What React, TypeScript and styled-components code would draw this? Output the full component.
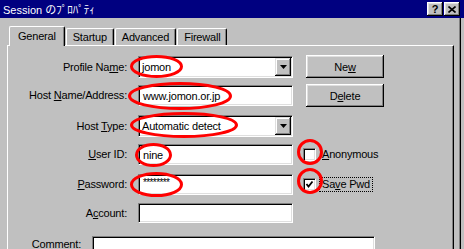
import React from "react";
import styled, { createGlobalStyle } from "styled-components";

const GlobalStyle = createGlobalStyle`
  html, body {
    margin: 0;
    padding: 0;
    background: #c0c0c0;
  }
  body {
    font-family: "Liberation Sans", Arial, sans-serif;
    font-size: 11px;
    letter-spacing: -0.2px;
    color: #000;
  }
  u {
    text-underline-offset: 1px;
  }
`;

const raised = `
  box-shadow: inset -1px -1px #000, inset 1px 1px #fff,
    inset -2px -2px #808080, inset 2px 2px #dfdfdf;
`;

const sunken = `
  border-top: 1px solid #808080;
  border-left: 1px solid #808080;
  border-bottom: 1px solid #fff;
  border-right: 1px solid #fff;
  box-shadow: inset 1px 1px #000, inset -1px -1px #dfdfdf;
`;

type Mark = { cx: number; cy: number; rx: number; ry: number };

const marks: Mark[] = [
  { cx: 156.5, cy: 66.5, rx: 25, ry: 10 },
  { cx: 180, cy: 96, rx: 50.5, ry: 12.5 },
  { cx: 184, cy: 125, rx: 52.5, ry: 11.5 },
  { cx: 153.5, cy: 155, rx: 17, ry: 10.5 },
  { cx: 156.5, cy: 184.5, rx: 25, ry: 11 },
  { cx: 310, cy: 152, rx: 11.5, ry: 11.5 },
  { cx: 310, cy: 181, rx: 11.5, ry: 11.5 },
];

const tabs = ["General", "Startup", "Advanced", "Firewall"];

function ComboBox({ value }: { value: string }) {
  return (
    <Combo>
      <FieldText>{value}</FieldText>
      <DropButton>
        <svg width="7" height="4" viewBox="0 0 7 4">
          <path d="M0 0h7L3.5 4z" fill="#000" />
        </svg>
      </DropButton>
    </Combo>
  );
}

function CheckBox({ checked }: { checked?: boolean }) {
  return (
    <Box>
      {checked && (
        <svg width="9" height="9" viewBox="0 0 9 9">
          <polyline
            points="1.5,4 3.5,6.5 7.5,1.5"
            fill="none"
            stroke="#000"
            strokeWidth="1.8"
          />
        </svg>
      )}
    </Box>
  );
}

export default function App() {
  return (
    <>
      <GlobalStyle />
      <Window>
        <TitleBar>
          <Title>Session のﾌﾟﾛﾊﾟﾃｨ</Title>
          <CaptionButtons>
            <CaptionButton>?</CaptionButton>
            <CaptionButton>
              <svg width="8" height="7" viewBox="0 0 8 7">
                <path d="M0.5 0.5L7.5 6.5M7.5 0.5L0.5 6.5" stroke="#000" strokeWidth="1.6" />
              </svg>
            </CaptionButton>
          </CaptionButtons>
        </TitleBar>

        <Body>
          <TabStrip>
            {tabs.map((t, i) => (
              <Tab key={t} $active={i === 0}>
                {t}
              </Tab>
            ))}
          </TabStrip>

          <Panel>
            <Form>
              <Label $h={22}>
                Profile Na<u>m</u>e:
              </Label>
              <ComboBox value="jomon" />
              <PushButton>
                Ne<u>w</u>
              </PushButton>

              <Label $h={21}>
                Host <u>N</u>ame/Address:
              </Label>
              <TextBox $h={21}>
                <FieldText>www.jomon.or.jp</FieldText>
              </TextBox>
              <PushButton>
                D<u>e</u>lete
              </PushButton>

              <Label $h={22}>
                Host <u>T</u>ype:
              </Label>
              <ComboBox value="Automatic detect" />

              <Label $h={21}>
                <u>U</u>ser ID:
              </Label>
              <TextBox $h={21}>
                <FieldText>nine</FieldText>
              </TextBox>
              <CheckRow>
                <CheckBox />
                <CheckLabel>
                  <u>A</u>nonymous
                </CheckLabel>
              </CheckRow>

              <Label $h={21}>
                <u>P</u>assword:
              </Label>
              <TextBox $h={21}>
                <Secret>********</Secret>
              </TextBox>
              <CheckRow>
                <CheckBox checked />
                <CheckLabel $focused>
                  Sa<u>v</u>e Pwd
                </CheckLabel>
              </CheckRow>

              <Label $h={20}>
                A<u>c</u>count:
              </Label>
              <TextBox $h={20} />
            </Form>

            <CommentRow>
              <CommentLabel>
                Co<u>m</u>ment:
              </CommentLabel>
              <CommentBox />
            </CommentRow>
          </Panel>
        </Body>

        <Marks width="464" height="249" viewBox="0 0 464 249">
          {marks.map((m, i) => (
            <ellipse
              key={i}
              cx={m.cx}
              cy={m.cy}
              rx={m.rx}
              ry={m.ry}
              fill="none"
              stroke="#ff0000"
              strokeWidth="3"
            />
          ))}
        </Marks>
      </Window>
    </>
  );
}

const Window = styled.div`
  position: relative;
  width: 464px;
  height: 249px;
  overflow: hidden;
  background: #c0c0c0;
`;

const TitleBar = styled.div`
  height: 18px;
  background: #000080;
  color: #fff;
  display: flex;
  align-items: center;
  justify-content: space-between;
  padding: 0 4px 0 3px;
`;

const Title = styled.div`
  font-family: "Liberation Sans", "Noto Sans CJK JP", sans-serif;
  font-size: 11px;
  letter-spacing: 0;
  white-space: nowrap;
`;

const CaptionButtons = styled.div`
  display: flex;
  gap: 1px;
`;

const CaptionButton = styled.div`
  box-sizing: border-box;
  width: 16px;
  height: 14px;
  background: #c0c0c0;
  color: #000;
  font-weight: bold;
  font-size: 11px;
  display: flex;
  align-items: center;
  justify-content: center;
  ${raised}
`;

const Body = styled.div`
  box-sizing: border-box;
  width: 461px;
  height: 231px;
  padding: 8px 0 0 7px;
  border-right: 1px solid #000;
  box-shadow: inset -1px 0 #808080;
`;

const TabStrip = styled.div`
  display: flex;
  align-items: flex-end;
  height: 19px;
  padding-left: 2px;
  position: relative;
  z-index: 1;
`;

const Tab = styled.div<{ $active?: boolean }>`
  box-sizing: border-box;
  height: ${(p) => (p.$active ? 20 : 17)}px;
  margin-bottom: ${(p) => (p.$active ? -1 : 0)}px;
  margin-left: ${(p) => (p.$active ? 0 : 1)}px;
  padding: 0 ${(p) => (p.$active ? 8 : 6)}px ${(p) => (p.$active ? 2 : 0)}px;
  background: #c0c0c0;
  border-top: 1px solid #fff;
  border-left: 1px solid #fff;
  border-right: 1px solid #000;
  border-radius: 2px 2px 0 0;
  box-shadow: inset -1px 0 #808080;
  display: flex;
  align-items: center;
  white-space: nowrap;
`;

const Panel = styled.div`
  box-sizing: border-box;
  width: 447px;
  height: 210px;
  background: #c0c0c0;
  border-top: 1px solid #fff;
  border-left: 1px solid #fff;
  border-right: 1px solid #000;
  box-shadow: inset -1px 0 #808080;
`;

const Form = styled.div`
  display: grid;
  grid-template-columns: 130px 155px 1fr;
  grid-template-rows: 29px 30px 29px 30px 29px 20px;
  align-items: start;
  padding-top: 10px;
`;

const Label = styled.div<{ $h: number }>`
  grid-column: 1;
  height: ${(p) => p.$h}px;
  line-height: ${(p) => p.$h}px;
  text-align: right;
  padding-right: 11px;
  white-space: nowrap;
`;

const TextBox = styled.div<{ $h: number }>`
  box-sizing: border-box;
  height: ${(p) => p.$h}px;
  background: #fff;
  padding: 0 2px;
  display: flex;
  align-items: center;
  ${sunken}
`;

const Combo = styled.div`
  box-sizing: border-box;
  height: 22px;
  background: #fff;
  padding: 1px;
  display: flex;
  align-items: stretch;
  ${sunken}
`;

const FieldText = styled.span`
  flex: 1;
  display: flex;
  align-items: center;
  padding-left: 2px;
  white-space: nowrap;
`;

const Secret = styled.span`
  font-size: 10px;
  letter-spacing: -0.6px;
  padding-left: 2px;
  margin-top: -5px;
`;

const DropButton = styled.div`
  box-sizing: border-box;
  width: 16px;
  background: #c0c0c0;
  display: flex;
  align-items: center;
  justify-content: center;
  box-shadow: inset -1px -1px #000, inset 1px 1px #dfdfdf,
    inset -2px -2px #808080, inset 2px 2px #fff;
`;

const PushButton = styled.div`
  box-sizing: border-box;
  width: 78px;
  height: 23px;
  margin: -1px 0 0 13px;
  background: #c0c0c0;
  display: flex;
  align-items: center;
  justify-content: center;
  ${raised}
`;

const CheckRow = styled.div`
  height: 21px;
  display: flex;
  align-items: center;
  padding-left: 10px;
`;

const Box = styled.span`
  box-sizing: border-box;
  width: 13px;
  height: 13px;
  background: #fff;
  display: flex;
  align-items: center;
  justify-content: center;
  ${sunken}
`;

const CheckLabel = styled.span<{ $focused?: boolean }>`
  margin-left: 3px;
  padding: 0 2px;
  line-height: 13px;
  border: 1px dotted ${(p) => (p.$focused ? "#000" : "transparent")};
  white-space: nowrap;
`;

const CommentRow = styled.div`
  display: flex;
  margin-top: 13px;
`;

const CommentLabel = styled.div`
  width: 73px;
  text-align: right;
  line-height: 16px;
  white-space: nowrap;
`;

const CommentBox = styled.div`
  box-sizing: border-box;
  width: 283px;
  height: 40px;
  margin-left: 11px;
  background: #fff;
  ${sunken}
`;

const Marks = styled.svg`
  position: absolute;
  left: 0;
  top: 0;
  pointer-events: none;
`;
